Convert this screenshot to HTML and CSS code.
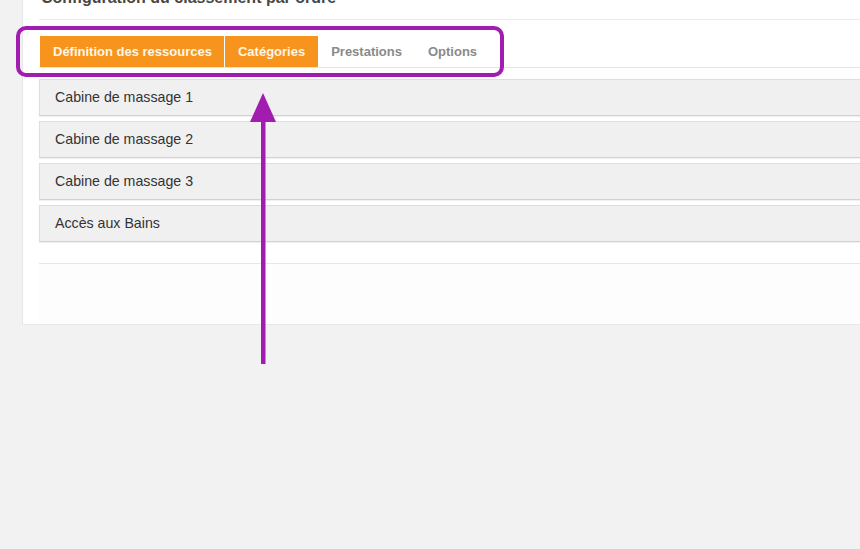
FILE: index.html
```html
<!DOCTYPE html>
<html lang="fr">
<head>
<meta charset="utf-8">
<link rel="stylesheet" href="styles.css">
</head>
<body>
<div class="panel">
  <h2 class="title">Configuration du classement par ordre</h2>
  <div class="tabs">
    <span class="tab active">Définition des ressources</span>
    <span class="tab active">Catégories</span>
    <span class="tab">Prestations</span>
    <span class="tab">Options</span>
  </div>
  <ul class="rows">
    <li class="row">Cabine de massage 1</li>
    <li class="row">Cabine de massage 2</li>
    <li class="row">Cabine de massage 3</li>
    <li class="row">Accès aux Bains</li>
  </ul>
  <div class="footer"></div>
</div>
<div class="highlight"></div>
<svg class="arrow" width="40" height="280" viewBox="0 0 40 280">
  <polygon points="20,0 7,29 33,29" fill="#a21caf"/>
  <rect x="18" y="26" width="4.5" height="245" fill="#a21caf"/>
</svg>
</body>
</html>
```
FILE: styles.css
```css
html, body {
  margin: 0;
  padding: 0;
}
body {
  background: #f2f2f2;
  font-family: "Liberation Sans", Arial, sans-serif;
  width: 860px;
  height: 549px;
  overflow: hidden;
  position: relative;
}
.panel {
  display: flex;
  flex-direction: column;
  margin-left: 22px;
  background: #fff;
  border-left: 1px solid #e6e6e6;
  border-bottom: 1px solid #e8e8e8;
  padding: 0 0 0 16px;
  height: 325px;
  box-sizing: border-box;
}
.title {
  margin: -12px 0 0 0;
  padding: 0 0 0 2px;
  font-size: 16px;
  line-height: 19px;
  height: 32px;
  flex: none;
  font-weight: bold;
  color: #474747;
  border-bottom: 1px solid #ebebeb;
  box-sizing: border-box;
  white-space: nowrap;
}
.tabs {
  display: flex;
  flex: none;
  margin-top: 16px;
  border-bottom: 1px solid #e4e4e4;
  padding-left: 1px;
}
.tab {
  font-size: 13px;
  font-weight: bold;
  color: #8a8a8a;
  padding: 0 13px;
  height: 31px;
  line-height: 31px;
}
.tab.active {
  background: #f7941d;
  color: #fff6e6;
}
.tab.active:first-child {
  padding-right: 12px;
}
.tab.active + .tab.active {
  margin-left: 1px;
}
.rows {
  list-style: none;
  margin: 11px 0 0 0;
  padding: 0;
  flex: none;
}
.row {
  height: 37px;
  box-sizing: border-box;
  background: #f0f0f0;
  border: 1px solid #dedede;
  border-right: none;
  border-bottom-color: #d2d2d2;
  box-shadow: 0 1px 1px rgba(0,0,0,0.06);
  margin-bottom: 5px;
  padding-left: 15px;
  font-size: 14.2px;
  line-height: 35px;
  color: #333;
}
.footer {
  margin-top: 16px;
  border-top: 1px solid #e6e6e6;
  flex: 1;
  background: #fdfdfd;
}
.highlight {
  position: absolute;
  left: 16px;
  top: 26px;
  width: 488px;
  height: 51px;
  box-sizing: border-box;
  border: 4.5px solid #a21caf;
  border-radius: 10px;
}
.arrow {
  position: absolute;
  left: 243px;
  top: 93px;
}
```
